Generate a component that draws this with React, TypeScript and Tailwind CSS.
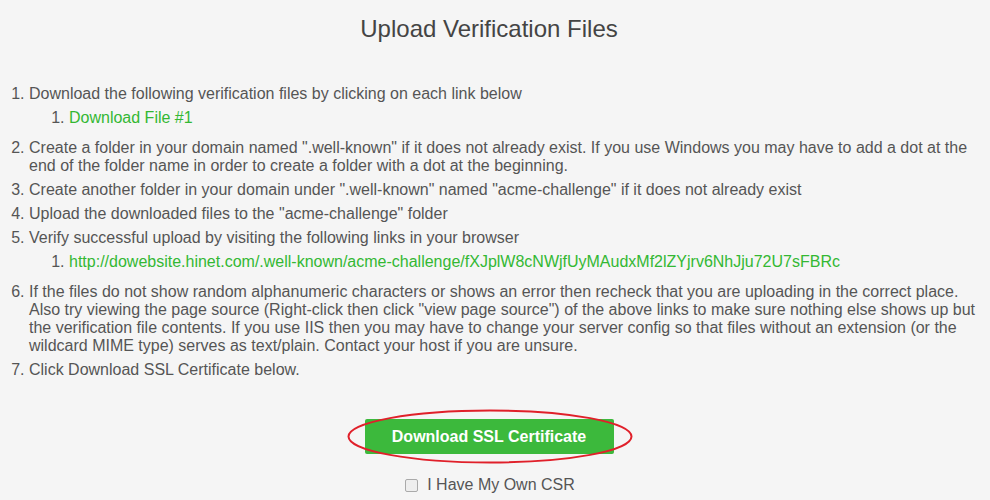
import React from "react";

const link = "text-[#33b833] no-underline";

export default function App() {
  return (
    <div className="min-h-[500px] bg-[#f5f5f5] font-['Liberation_Sans',Arial,sans-serif] text-[16px] leading-[18px] text-[#555]">
      <h1 className="pr-[12px] pt-[15px] text-center text-[24px] leading-[28px] text-[#444]">Upload Verification Files</h1>

      <ol className="mt-[42px] list-decimal pl-[29px] pr-[8px]">
        <li className="mb-[6px]">
          Download the following verification files by clicking on each link below
          <ol className="mt-[6px] list-decimal pb-[6px] pl-[40px]">
            <li>
              <a className={link}>Download File #1</a>
            </li>
          </ol>
        </li>
        <li className="mb-[6px]">
          Create a folder in your domain named ".well-known" if it does not already exist. If you use Windows you may have to add a dot at the
          end of the folder name in order to create a folder with a dot at the beginning.
        </li>
        <li className="mb-[6px]">Create another folder in your domain under ".well-known" named "acme-challenge" if it does not already exist</li>
        <li className="mb-[6px]">Upload the downloaded files to the "acme-challenge" folder</li>
        <li className="mb-[6px]">
          Verify successful upload by visiting the following links in your browser
          <ol className="mt-[6px] list-decimal pb-[6px] pl-[40px]">
            <li>
              <a className={link}>http://dowebsite.hinet.com/.well-known/acme-challenge/fXJplW8cNWjfUyMAudxMf2lZYjrv6NhJju72U7sFBRc</a>
            </li>
          </ol>
        </li>
        <li className="mb-[6px]">
          If the files do not show random alphanumeric characters or shows an error then recheck that you are uploading in the correct place.
          Also try viewing the page source (Right-click then click "view page source") of the above links to make sure nothing else shows up but
          the verification file contents. If you use IIS then you may have to change your server config so that files without an extension (or the
          wildcard MIME type) serves as text/plain. Contact your host if you are unsure.
        </li>
        <li className="mb-[6px]">Click Download SSL Certificate below.</li>
      </ol>

      <div className="mt-[40px] flex justify-center">
        <div className="relative ml-[-12px] h-[35px] w-[249px]">
          <button className="block h-[35px] w-[249px] rounded-[2px] bg-[#3cb93c] text-[16px] font-bold text-white">
            Download SSL Certificate
          </button>
          <svg
            className="pointer-events-none absolute left-[-18px] top-[-10px] h-[55px] w-[286px] max-w-none"
            viewBox="0 0 286 55"
          >
            <ellipse cx="143" cy="27.5" rx="141.5" ry="26" fill="none" stroke="#e0202a" strokeWidth="2" />
          </svg>
        </div>
      </div>

      <div className="mt-[22px] flex items-center justify-center gap-[9px]">
        <span className="ml-[-10px] box-border h-[13px] w-[13px] rounded-[2px] border border-[#aaa] bg-[#eee]" />
        <span className="leading-[18px]">I Have My Own CSR</span>
      </div>
    </div>
  );
}
